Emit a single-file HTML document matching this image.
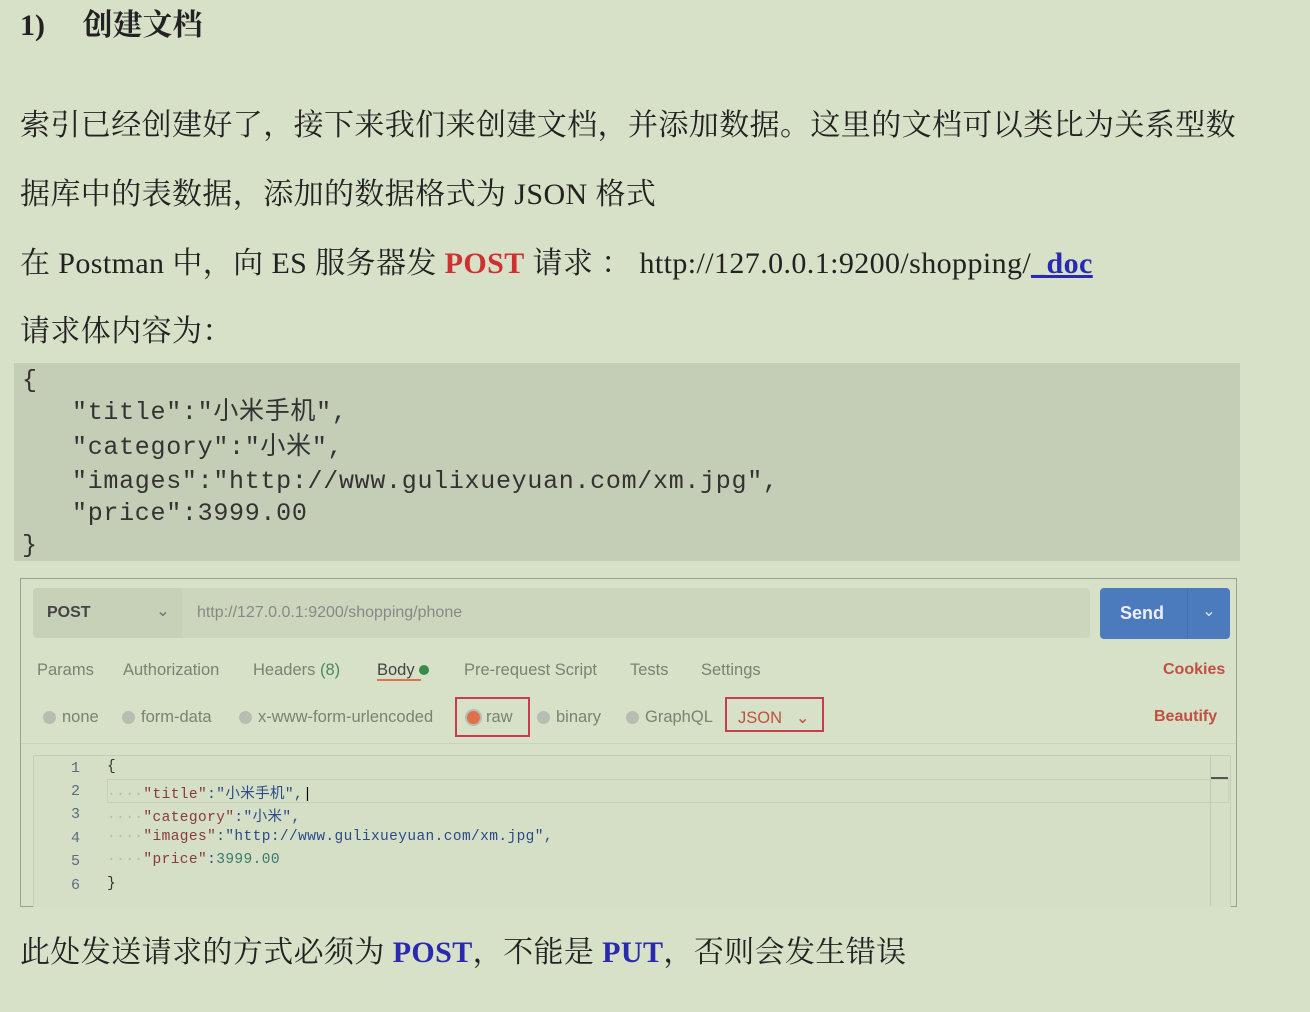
<!DOCTYPE html>
<html><head><meta charset="utf-8"><style>
body{margin:0;width:1310px;height:1012px;background:#d6e1c8;font-family:"Liberation Serif","Noto Serif CJK SC",serif;color:#222;position:relative;overflow:hidden}
.a{position:absolute;white-space:nowrap}
.p{font-size:30px;left:20px;line-height:36px;letter-spacing:0.4px}
.code{position:absolute;left:14px;top:363px;width:1226px;height:198px;background:#c4cdb6}
.code div{position:absolute;font-family:"Liberation Mono","Noto Sans CJK SC",monospace;font-size:25px;color:#333;white-space:nowrap;line-height:30px;letter-spacing:0.7px}
.pm{position:absolute;left:20px;top:578px;width:1215px;height:327px;border:1.5px solid #9aa393;font-family:"Liberation Sans",sans-serif}
.s{font-family:"Liberation Sans",sans-serif;font-size:16.5px;color:#7a8274;position:absolute;white-space:nowrap}
.dot{display:inline-block;width:13px;height:13px;border-radius:50%;background:#b7bdb0;vertical-align:-2px;margin-right:6px}
.ln{position:absolute;font-family:"Liberation Mono",monospace;font-size:15px;color:#5a6a80;left:50px}
.cl{position:absolute;left:86px;font-family:"Liberation Mono","Noto Sans CJK SC",monospace;font-size:14.5px;white-space:nowrap;color:#2a4a8a;letter-spacing:0.4px}
.k{color:#8a3a3a}.d{color:#b5bcae}
</style></head><body>
<div class="a" style="left:20px;top:8px;font-size:30px;font-weight:bold;line-height:36px">1)&nbsp;&nbsp;&nbsp;&nbsp;&nbsp;创建文档</div>
<div class="a p" style="top:108px">索引已经创建好了，接下来我们来创建文档，并添加数据。这里的文档可以类比为关系型数</div>
<div class="a p" style="top:177px">据库中的表数据，添加的数据格式为 JSON 格式</div>
<div class="a p" style="top:246px;letter-spacing:0.4px">在 Postman 中，向 ES 服务器发 <b style="color:#d03030">POST</b> 请求 ： http://127.0.0.1:9200/shopping/<b style="color:#2a2ab0;text-decoration:underline">_doc</b></div>
<div class="a p" style="top:314px">请求体内容为：</div>
<div class="code">
<div style="left:8px;top:3px">{</div>
<div style="left:58px;top:35px">"title":"小米手机",</div>
<div style="left:58px;top:70px">"category":"小米",</div>
<div style="left:58px;top:104px">"images":"http://www.gulixueyuan.com/xm.jpg",</div>
<div style="left:58px;top:136px">"price":3999.00</div>
<div style="left:8px;top:168px">}</div>
</div>
<div class="pm">
<div style="position:absolute;left:12px;top:9px;width:1057px;height:50px;background:#ccd6bd;border-radius:4px"></div>
<div style="position:absolute;left:12px;top:9px;width:149px;height:50px;background:#c7d1b8;border-radius:4px 0 0 4px"></div>
<div class="s" style="left:26px;top:25px;color:#444;font-weight:bold;font-size:16px">POST</div>
<div class="s" style="left:135px;top:22px;color:#777">⌄</div>
<div class="s" style="left:176px;top:25px;color:#888;font-size:16px">http://127.0.0.1:9200/shopping/phone</div>
<div style="position:absolute;left:1079px;top:9px;width:130px;height:51px;background:#4b7bbd;border-radius:4px"></div>
<div style="position:absolute;left:1166px;top:9px;width:1px;height:51px;background:#4270b0"></div>
<div class="s" style="left:1099px;top:24px;color:#eef;font-weight:bold;font-size:18px">Send</div>
<div class="s" style="left:1181px;top:22px;color:#dde">⌄</div>
<div class="s" style="left:16px;top:82px">Params</div>
<div class="s" style="left:102px;top:82px">Authorization</div>
<div class="s" style="left:232px;top:82px">Headers <span style="color:#4a8a5a">(8)</span></div>
<div class="s" style="left:356px;top:82px;color:#444">Body <span style="display:inline-block;width:10px;height:10px;border-radius:50%;background:#3a8a4a"></span></div>
<div style="position:absolute;left:356px;top:100px;width:44px;height:2px;background:#e07050"></div>
<div class="s" style="left:443px;top:82px">Pre-request Script</div>
<div class="s" style="left:609px;top:82px">Tests</div>
<div class="s" style="left:680px;top:82px">Settings</div>
<div class="s" style="left:1142px;top:82px;color:#c05040;font-weight:bold;font-size:16px">Cookies</div>
<div class="s" style="left:22px;top:129px"><span class="dot"></span>none</div>
<div class="s" style="left:101px;top:129px"><span class="dot"></span>form-data</div>
<div class="s" style="left:218px;top:129px"><span class="dot"></span>x-www-form-urlencoded</div>
<div style="position:absolute;left:434px;top:118px;width:71px;height:36px;border:2px solid #c83c4c"></div>
<div class="s" style="left:446px;top:129px"><span class="dot" style="background:#e0704c;box-shadow:0 0 0 2px #b7bdb0"></span>raw</div>
<div class="s" style="left:516px;top:129px"><span class="dot"></span>binary</div>
<div class="s" style="left:605px;top:129px"><span class="dot"></span>GraphQL</div>
<div style="position:absolute;left:704px;top:118px;width:95px;height:31px;border:2px solid #c83c4c"></div>
<div class="s" style="left:717px;top:129px;color:#c05040">JSON &nbsp;&nbsp;⌄</div>
<div class="s" style="left:1133px;top:129px;color:#c05040;font-weight:bold;font-size:16px">Beautify</div>
<div style="position:absolute;left:0;top:164px;width:1215px;height:1px;background:#c8d2bb"></div>
<div style="position:absolute;left:12px;top:176px;width:1196px;height:151px;border:1px solid #c3ccb7;border-bottom:none;background:#d4dfc6"></div>
<div style="position:absolute;left:86px;top:200px;width:1120px;height:22px;border:1px solid #c6cfba"></div>
<div style="position:absolute;left:1189px;top:176px;width:1px;height:151px;background:#c0c9b4"></div>
<div style="position:absolute;left:1190px;top:198px;width:17px;height:2px;background:#555"></div>
<div class="ln" style="top:181px">1</div><div class="ln" style="top:204px">2</div><div class="ln" style="top:227px">3</div><div class="ln" style="top:251px">4</div><div class="ln" style="top:274px">5</div><div class="ln" style="top:298px">6</div>
<div class="cl" style="top:180px;color:#333">{</div>
<div class="cl" style="top:203px"><span class="d">····</span><span class="k">"title"</span>:"小米手机",<span style="color:#000">|</span></div>
<div class="cl" style="top:226px"><span class="d">····</span><span class="k">"category"</span>:"小米",</div>
<div class="cl" style="top:250px"><span class="d">····</span><span class="k">"images"</span>:"http://www.gulixueyuan.com/xm.jpg",</div>
<div class="cl" style="top:273px"><span class="d">····</span><span class="k">"price"</span>:<span style="color:#3a7a6a">3999.00</span></div>
<div class="cl" style="top:297px;color:#333">}</div>
</div>
<div class="a p" style="top:935px">此处发送请求的方式必须为 <b style="color:#2a2ab0">POST</b>，不能是 <b style="color:#2a2ab0">PUT</b>，否则会发生错误</div>
</body></html>
